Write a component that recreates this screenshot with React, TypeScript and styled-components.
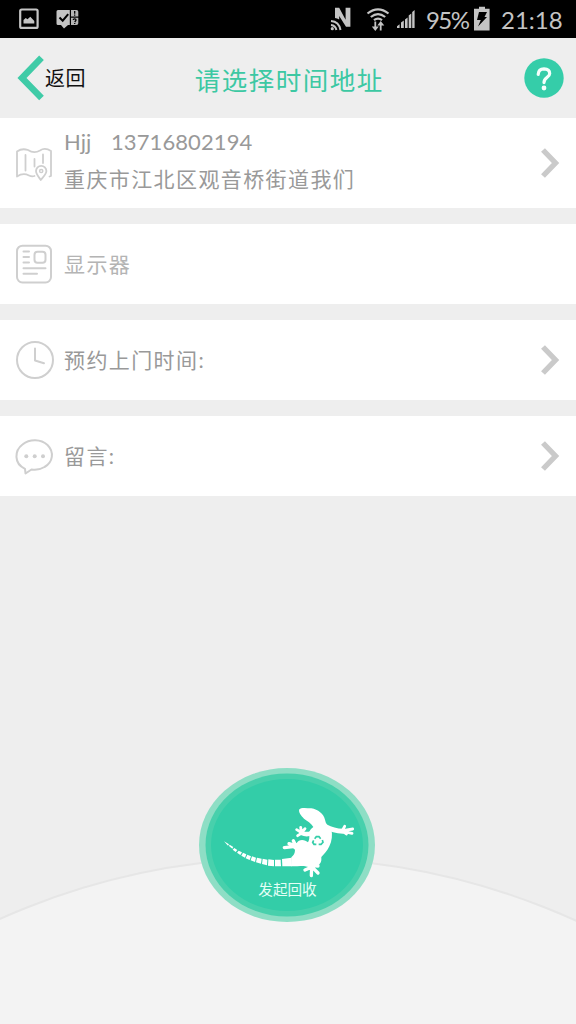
import React from 'react';
import styled, { createGlobalStyle } from 'styled-components';

const GlobalStyle = createGlobalStyle`
  * { box-sizing: border-box; }
  body { margin: 0; background: #eee; }
`;

const Screen = styled.div`
  width: 576px;
  height: 1024px;
  display: flex;
  flex-direction: column;
  overflow: hidden;
  background: #eee;
  font-family: Lato, 'Noto Sans CJK SC', sans-serif;
`;

const StatusBar = styled.div`
  height: 38px;
  flex: none;
  display: flex;
  align-items: center;
  background: #000;
  padding: 0 13px 0 19px;
  color: #c4c4c4;
`;

const StatusIcon = styled.svg<{ $gap?: number }>`
  flex: none;
  display: block;
  margin-left: ${p => p.$gap ?? 0}px;
`;

const StatusText = styled.span<{ $width: number; $gap: number; $spacing: number }>`
  flex: none;
  width: ${p => p.$width}px;
  margin-left: ${p => p.$gap}px;
  font-size: 24px;
  font-weight: 400;
  line-height: 38px;
  padding-top: 2px;
  letter-spacing: ${p => p.$spacing}px;
  white-space: nowrap;
`;

const Spacer = styled.div`
  flex: 1;
`;

const Header = styled.header`
  height: 80px;
  flex: none;
  display: grid;
  grid-template-columns: 106px 1fr 106px;
  align-items: center;
  padding: 0 12.5px 0 17px;
`;

const BackButton = styled.div`
  display: flex;
  align-items: center;
  color: #111;
  font-size: 20px;
  letter-spacing: 0.5px;
  line-height: 30px;
  white-space: nowrap;
`;

const Title = styled.h1`
  margin: 0;
  padding: 3px 2px 0 0;
  text-align: center;
  color: #3cc8a3;
  font-size: 25.5px;
  font-weight: 400;
  letter-spacing: 1.5px;
  line-height: 36px;
  white-space: nowrap;
`;

const HelpSlot = styled.div`
  display: flex;
  justify-content: flex-end;
`;

const List = styled.div`
  flex: none;
  display: flex;
  flex-direction: column;
  gap: 16px;
`;

const Row = styled.div<{ $height?: number }>`
  height: ${p => p.$height ?? 80}px;
  display: flex;
  align-items: center;
  padding: 0 15px 0 14px;
  background: #fff;
`;

const RowIcon = styled.svg`
  flex: none;
  width: 42px;
  height: 42px;
  margin-right: 8px;
  fill: none;
  stroke: #cfcfcf;
  stroke-width: 2;
  stroke-linecap: round;
  stroke-linejoin: round;
`;

const RowText = styled.div<{ $color?: string }>`
  flex: 1;
  color: ${p => p.$color ?? '#999'};
  font-size: 21px;
  font-weight: 400;
  letter-spacing: 1.4px;
  line-height: 38px;
  white-space: pre;
`;

const Contact = styled.div`
  height: 38px;
  font-size: 22px;
  letter-spacing: 0.1px;
  word-spacing: 4px;
  margin-top: -5px;
`;

const Address = styled.div`
  height: 38px;
  margin-top: -1px;
`;

const Stage = styled.main`
  flex: 1;
  position: relative;
  display: flex;
  justify-content: center;
  align-items: flex-start;
  padding: 271px 3px 0 0;
`;

const Hill = styled.svg`
  position: absolute;
  inset: 0;
`;

const RecycleButton = styled.div`
  position: relative;
  width: 178px;
  height: 156px;
  display: flex;
  justify-content: center;
  align-items: flex-end;
  padding: 0 0 22px 2px;
`;

const ButtonArt = styled.svg`
  position: absolute;
  left: 0;
  top: 0;
`;

const ButtonLabel = styled.span`
  position: relative;
  color: #e4fff6;
  font-size: 14.6px;
  font-weight: 400;
  line-height: 22px;
  white-space: nowrap;
`;

const Chevron = () => (
  <svg width="22" height="34" viewBox="0 0 22 34">
    <path d="M4 4L16.5 17L4 30" fill="none" stroke="#cacaca" strokeWidth="5.4" />
  </svg>
);

const PictureIcon = () => (
  <StatusIcon width="20" height="22" viewBox="0 0 20 22">
    <rect x="1.2" y="1.5" width="17.4" height="18.4" rx="1.5" fill="none" stroke="#c4c4c4" strokeWidth="2.2" />
    <path d="M4.5 15.5V12l2.2-2 1.8 1.3 2.8-2.5 4 4.2v2.5z" fill="#c4c4c4" />
  </StatusIcon>
);

const CheckIcon = () => (
  <StatusIcon $gap={17} width="24" height="22" viewBox="0 0 24 22">
    <path d="M2 2h11.8v15H12l-4 3.5L5 17H2q-1.5 0-1.5-1.5v-12Q.5 2 2 2z" fill="#c4c4c4" />
    <path d="M3.5 9.5l3.2 3.2 5.5-6.5" fill="none" stroke="#000" strokeWidth="2" />
    <path d="M15 2h5.5q1.8 0 1.8 1.8V8.5H15zM15 9.8h7.3v5.4q0 1.8-1.8 1.8H15z" fill="#b5b5b5" />
    <path d="M18.7 3v2.8M18.7 6.6v1.2M17.2 12q.2-1.2 1.5-1.1 1.5.2 1.2 1.5L18.7 14M18.7 15v1.1" fill="none" stroke="#000" strokeWidth="1.3" />
  </StatusIcon>
);

const NfcIcon = () => (
  <StatusIcon width="22" height="26" viewBox="0 0 22 26" fill="none" stroke="#c4c4c4">
    <path d="M5 12V1.8h4.2l6.4 12V1.8h4.8v19h-4.4L9.2 10v3.5Q7 12.2 5 12z" fill="#c4c4c4" stroke="none" />
    <path d="M1 15q8 .5 9.5 9M1 19q4.5.5 5.4 5" strokeWidth="2" />
    <circle cx="2.3" cy="22.7" r="1.6" fill="#c4c4c4" stroke="none" />
  </StatusIcon>
);

const WifiIcon = () => (
  <StatusIcon $gap={14} width="24" height="26" viewBox="0 0 24 26" fill="none" stroke="#c4c4c4" strokeWidth="2.2">
    <path d="M1.5 7.5Q12 -.8 22.5 7.5M4.8 11Q12 5.3 19.2 11M8 14.2Q12 11 16 14.2" />
    <path d="M9.3 15.5v7M14.7 24.5v-7" strokeWidth="1.8" />
    <path d="M5.8 20.5h7L9.3 25zM11.3 19.5h7l-3.6-4.6z" fill="#c4c4c4" stroke="none" />
  </StatusIcon>
);

const SignalIcon = () => (
  <StatusIcon $gap={6} width="20" height="22" viewBox="0 0 20 22" fill="#c4c4c4">
    <path d="M1 18.2l2.6-2v3.8H1zM5 14.5l2.8-2V20H5zM9 11.5l2.6-2V20H9zM12.7 7.5l2.6-2V20h-2.6zM16.2 4l2.4-2v18h-2.4z" />
  </StatusIcon>
);

const BatteryIcon = () => (
  <StatusIcon $gap={4} width="18" height="26" viewBox="0 0 18 26">
    <path d="M6 .8h6v2h4.6V24.5H1V2.8h5z" fill="#c4c4c4" />
    <path d="M6 6h8l-2.5 5H14L5 20.5 7.8 14H4z" fill="#000" />
  </StatusIcon>
);

const Recycle = () => (
  <g fill="none" stroke="#33cda8" strokeWidth="5">
    <path d="M299 131l5-6h8l5 6" />
    <path d="M322 135l2 7-6 6h-7" />
    <path d="M304 148h-7l-4-6 3-6" />
  </g>
);

const tailSegments = [
  '44,149 55,156 52,161 42,153', '58,159 67,165 62,171 53,164',
  '71,167 81,172 76,180 66,173', '84,173 94,178 90,188 79,182',
  '97,179 108,184 104,195 92,190', '111,184 123,188 120,201 107,196',
  '126,188 140,191 138,206 123,202', '143,191 157,194 156,211 141,207',
  '160,193 177,195 177,214 159,212', '180,194 197,194 198,214 180,214',
  '201,192 230,188 231,214 202,214',
];

const Lizard = () => (
  <g transform="translate(17 28) scale(.33333)">
    <g fill="#fff">
      <path d="M253 43C257 37 274 39 289 40C309 44 326 56 330 74C332 86 338 93 349 103C353 120 351 138 343 154C337 168 327 178 319 186L319 196C317 210 304 216 289 218L267 213C252 213 241 214 229 214L229 187C236 181 240 175 240 165C240 154 243 142 252 137C261 132 273 136 279 142C283 136 284 126 282 118C282 107 289 100 295 96C289 85 276 77 267 71C259 64 249 51 253 43Z" />
      <path d="M27 139L42 148 39 152Z" />
      {tailSegments.map(points => <polygon key={points} points={points} />)}
    </g>
    <g fill="none" stroke="#fff" strokeLinecap="round" strokeLinejoin="round">
      <path d="M332 95Q355 108 384 109" strokeWidth="15" />
      <path d="M384 109L411 115M384 107L413 102M383 105L389 94M384 109L394 117" strokeWidth="8.5" />
      <path d="M290 114Q275 121 260 114" strokeWidth="14" />
      <path d="M259 115L248 122M258 112L245 104M259 110L257 97M262 111L270 101" strokeWidth="8.5" />
      <path d="M255 166L241 153" strokeWidth="18" />
      <path d="M241 154L208 158M240 151L222 146M241 149L235 137" strokeWidth="10" />
      <path d="M309 192L292 206 291 217" strokeWidth="17" />
      <path d="M290 216L289 242M289 217L270 225M293 218L309 234M293 212L309 213" strokeWidth="10" />
    </g>
    <Recycle />
  </g>
);

export default function App() {
  return (
    <Screen>
      <GlobalStyle />
      <StatusBar>
        <PictureIcon />
        <CheckIcon />
        <Spacer />
        <NfcIcon />
        <WifiIcon />
        <SignalIcon />
        <StatusText $width={43} $gap={10} $spacing={-1.6}>95%</StatusText>
        <BatteryIcon />
        <StatusText $width={62} $gap={10} $spacing={0}>21:18</StatusText>
      </StatusBar>

      <Header>
        <BackButton>
          <svg width="28" height="46" viewBox="0 0 28 46">
            <path d="M24.5 2.8L5 23L24.5 43" fill="none" stroke="#3fcba7" strokeWidth="6.5" />
          </svg>
          返回
        </BackButton>
        <Title>请选择时间地址</Title>
        <HelpSlot>
          <svg width="40" height="40" viewBox="0 0 40 40">
            <circle cx="20" cy="20" r="19.7" fill="#35cda9" />
            <path d="M14.2 16.3Q14.5 10.9 20 10.8Q25.6 11 25.7 15.5C25.7 19.5 20 19.3 20 24.6" fill="none" stroke="#f5fffc" strokeWidth="3.2" strokeLinecap="round" />
            <circle cx="20" cy="30" r="2.4" fill="#f5fffc" />
          </svg>
        </HelpSlot>
      </Header>

      <List>
        <Row $height={90}>
          <RowIcon viewBox="0 0 42 42">
            <path d="M35.5 34.5L37 34V9Q31 5 26 8.5Q20 12 14 8Q8 6 3 9.5V34.5Q9 30.5 15 33.5Q18 35 20.5 34M11.5 13V28.5M20.5 17V24.5M29 12.5V21" strokeWidth="1.8" />
            <path d="M26.8 38C24 34 22 31.8 22 29A5.2 5.2 0 0 1 32.4 29C32.4 31.8 29.8 34.3 26.8 38Z" strokeWidth="1.8" />
            <circle cx="27.2" cy="29" r="1.6" strokeWidth="1.5" />
          </RowIcon>
          <RowText>
            <Contact>Hjj  13716802194</Contact>
            <Address>重庆市江北区观音桥街道我们</Address>
          </RowText>
          <Chevron />
        </Row>
        <Row>
          <RowIcon viewBox="0 0 42 42">
            <rect x="3" y="2.7" width="34" height="36.8" rx="5.5" />
            <rect x="20.5" y="8.7" width="11" height="11" rx="3" />
            <path d="M9.5 8.5H15M9.5 14H15M9.5 19.5H15M9.5 25.3H31.5M9.5 30.7H23" />
          </RowIcon>
          <RowText $color="#b4b4b4">显示器</RowText>
        </Row>
        <Row>
          <RowIcon viewBox="0 0 42 42">
            <circle cx="21" cy="21" r="18" />
            <path d="M21 9.5V21.5L30 24.2" />
          </RowIcon>
          <RowText>预约上门时间:</RowText>
          <Chevron />
        </Row>
        <Row>
          <RowIcon viewBox="0 0 42 42">
            <path d="M11 33.8C-.5 28.5.5 15.5 8.5 9.5C16 3.5 27 4 33.5 10C40.5 17 39 27.5 30.5 32C25.5 35 20 35 17.5 34.5L11.5 38.5Z" />
            <g fill="#cfcfcf" stroke="none">
              <circle cx="12.3" cy="21.3" r="2" />
              <circle cx="20.7" cy="21.3" r="2" />
              <circle cx="29" cy="21.3" r="2" />
            </g>
          </RowIcon>
          <RowText>留言:</RowText>
          <Chevron />
        </Row>
      </List>

      <Stage>
        <Hill width="576" height="528" viewBox="0 0 576 528">
          <circle cx="286" cy="1064" r="702" fill="#f3f3f3" stroke="#e6e6e6" strokeWidth="2" />
        </Hill>
        <RecycleButton>
          <ButtonArt width="178" height="156" viewBox="0 0 178 156">
            <ellipse cx="89" cy="78" rx="88" ry="77" fill="#8edec5" />
            <ellipse cx="89" cy="78" rx="81.5" ry="71.5" fill="#48d0ac" />
            <ellipse cx="89" cy="78" rx="76" ry="66" fill="#33cda8" />
            <Lizard />
          </ButtonArt>
          <ButtonLabel>发起回收</ButtonLabel>
        </RecycleButton>
      </Stage>
    </Screen>
  );
}
